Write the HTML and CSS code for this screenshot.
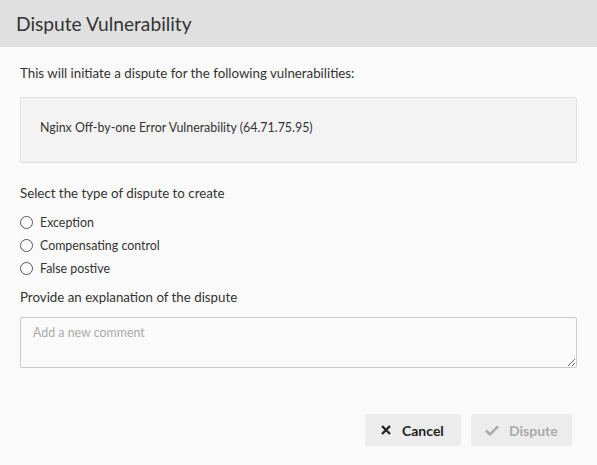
FILE: index.html
```html
<!DOCTYPE html>
<html>
<head>
<meta charset="utf-8">
<link rel="stylesheet" href="styles.css">
</head>
<body>
<div class="modal">
  <div class="header"><h1 class="title">Dispute Vulnerability</h1></div>
  <div class="content">
    <p class="intro">This will initiate a dispute for the following vulnerabilities:</p>
    <div class="vulns">Nginx Off-by-one Error Vulnerability (64.71.75.95)</div>
    <p class="label type-label">Select the type of dispute to create</p>
    <div class="radios">
      <label class="radio"><span class="circle"></span>Exception</label>
      <label class="radio"><span class="circle"></span>Compensating control</label>
      <label class="radio"><span class="circle"></span>False postive</label>
    </div>
    <p class="label expl-label">Provide an explanation of the dispute</p>
    <textarea class="comment" placeholder="Add a new comment"></textarea>
  </div>
  <div class="actions">
    <button class="btn cancel"><svg class="icon" viewBox="0 0 10 10" width="10" height="10"><path d="M1 1 L9 9 M9 1 L1 9" stroke="#222" stroke-width="2.3" stroke-linecap="butt"/></svg>Cancel</button>
    <button class="btn dispute" disabled><svg class="icon" viewBox="0 0 14 11" width="14" height="11"><path d="M1 5.5 L5 9.3 L13 1.3" stroke="#a8a8a8" stroke-width="2.5" fill="none"/></svg>Dispute</button>
  </div>
</div>
</body>
</html>
```
FILE: styles.css
```css
* { box-sizing: border-box; }
html, body { margin: 0; padding: 0; }
body {
  background: #fafafa;
  font-family: "Lato", "Liberation Sans", sans-serif;
  color: #333;
  width: 597px;
  height: 465px;
  overflow: hidden;
}
.modal { display: flex; flex-direction: column; height: 465px; }
.header {
  background: #e0e0e0;
  height: 47px;
  display: flex;
  align-items: center;
  padding-left: 16px;
}
.title {
  margin: 0;
  font-weight: 400;
  font-size: 19.2px;
  color: #333;
}
.content { padding: 0 20px; }
.intro { margin: 17px 0 0; font-size: 13.3px; line-height: 18px; }
.vulns {
  margin-top: 15px;
  height: 66px;
  background: #f3f3f3;
  border: 1px solid #e0e0e0;
  border-radius: 2px;
  display: flex;
  align-items: center;
  padding: 0 0 5px 19px;
  font-size: 12.4px;
  color: #333;
}
.label { margin: 0; font-size: 13.3px; line-height: 18px; }
.type-label { margin-top: 21px; }
.radios { display: flex; flex-direction: column; margin-top: 9px; }
.radio {
  display: flex; align-items: center;
  height: 23px;
  font-size: 12.4px;
  color: #333;
}
.circle {
  width: 13px; height: 13px;
  border: 1px solid #555;
  border-radius: 50%;
  margin-right: 7px;
  background: #fff;
}
.expl-label { margin-top: 8px; }
.comment {
  display: block;
  margin-top: 11px;
  width: 557px;
  height: 51px;
  border: 1px solid #ccc;
  border-radius: 2px;
  background: #fafafa;
  padding: 7px 12px;
  font-family: inherit;
  font-size: 12.4px;
  resize: vertical;
}
.comment::placeholder { color: #aaa; }
.actions {
  display: flex;
  justify-content: flex-end;
  gap: 10px;
  padding: 46px 25px 0 0;
}
.btn {
  display: flex; align-items: center;
  height: 32px;
  border: none;
  border-radius: 3px;
  background: #ececec;
  font-family: inherit;
  font-size: 14px;
  font-weight: 700;
  padding: 0 16px;
}
.btn .icon { margin-right: 11px; flex: none; }
.cancel { color: #222; width: 96px; }
.dispute { color: #aaa; width: 101px; padding-left: 14px; }
.dispute .icon { margin-right: 10px; }
```
